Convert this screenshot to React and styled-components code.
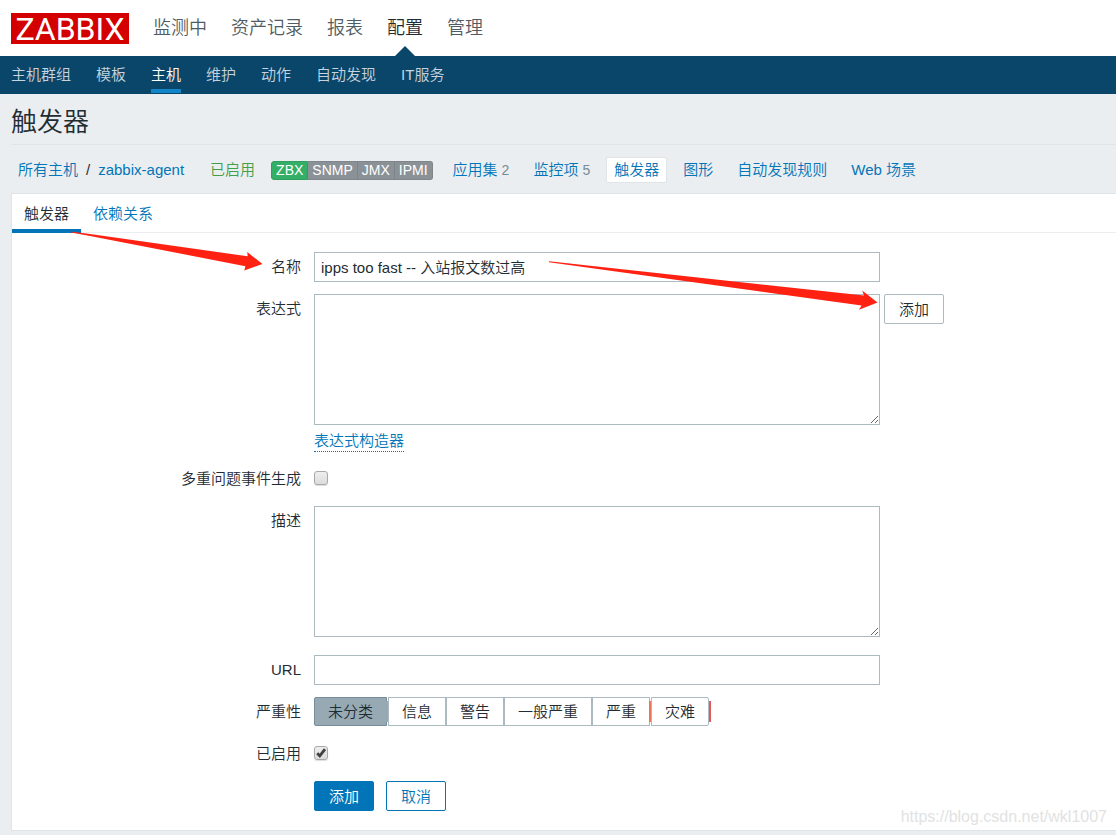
import React from 'react';
import {useState} from 'react';
import styled, {createGlobalStyle} from "styled-components"

const GlobalStyle = createGlobalStyle`
	* {
		box-sizing: border-box;
	}
	body {
		margin: 0;
		background-color: #ebeef0;
		color: #1f2c33;
		font-family: "Liberation Sans", "Noto Sans CJK SC", sans-serif;
		font-size: 15px;
		font-weight: 350;
		line-height: 20px;
	}
	button, input, textarea {
		font: inherit;
		color: inherit;
	}
`

const Page = styled.div`
	position: relative;
	overflow-x: hidden;
`

const TopBar = styled.header`
	display: flex;
	align-items: center;
	height: 56px;
	padding: 0 11px;
	background-color: #fff;
`

const Logo = styled.a`
	min-width: 118px;
	height: 31px;
	margin-right: 24px;
	background-color: #d40000;
	color: #fff;
	font-family: Roboto, "Liberation Sans", sans-serif;
	font-size: 32px;
	font-weight: 400;
	line-height: 32px;
	text-align: center;
	text-decoration: none;
`

const TopNav = styled.nav`
	display: flex;
	align-self: stretch;
	gap: 24px;
`

const TopLink = styled.a`
	position: relative;
	color: ${({$active}) => $active ? "#1f2c33" : "#4f5c63"};
	font-size: 18px;
	line-height: 56px;
	text-decoration: none;

	&::after {
		content: "";
		display: ${({$active}) => $active ? "block" : "none"};
		position: absolute;
		bottom: 0;
		left: 50%;
		margin-left: -10px;
		border: 10px solid transparent;
		border-top: none;
		border-bottom-color: #0a466a;
	}
`

const SubNav = styled.nav`
	display: flex;
	gap: 25px;
	height: 38px;
	padding: 0 11px;
	background-color: #0a466a;
`

const SubLink = styled.a`
	height: 37px;
	border-bottom: 4px solid ${({$active}) => $active ? "#1284c8" : "transparent"};
	color: ${({$active}) => $active ? "#fff" : "#c5d4de"};
	line-height: 37px;
	text-decoration: none;
`

const Main = styled.main`
	padding-left: 11px;
`

const Title = styled.h1`
	height: 51px;
	margin: 0;
	border-bottom: 1px solid #dfe4e7;
	font-size: 26px;
	font-weight: inherit;
	line-height: 56px;
`

const Crumbs = styled.nav`
	display: flex;
	align-items: center;
	gap: 8px;
	height: 48px;
	padding-top: 2px;
`

const Path = styled.div`
	display: flex;
	gap: 8px;
	padding: 0 10px 0 7px;
`

const Link = styled.a`
	color: #0275b8;
	text-decoration: none;
`

const CrumbLink = styled(Link)`
	padding: 2px 7px;
	border: 1px solid ${({$active}) => $active ? "#dfe4e7" : "transparent"};
	border-radius: 2px;
	background-color: ${({$active}) => $active ? "#fff" : "transparent"};
`

const Count = styled.sup`
	margin-left: 4px;
	color: #768d99;
	font-size: 14px;
	line-height: 1;
	vertical-align: baseline;
`

const Enabled = styled.span`
	padding: 0 8px;
	color: #429e47;
`

const Interfaces = styled.div`
	display: flex;
	margin-right: 4px;
`

const Interface = styled.span`
	padding: 0 4px;
	border: 1px solid ${({$on}) => $on ? "#2f9f5e" : "#7e868c"};
	border-left-width: ${({$on}) => $on ? "1px" : "0"};
	background-color: ${({$on}) => $on ? "#34af67" : "#8b9297"};
	color: #fff;
	font-size: 14px;
	line-height: 17px;

	&:first-child {
		border-radius: 3px 0 0 3px;
	}
	&:last-child {
		border-radius: 0 3px 3px 0;
	}
`

const Panel = styled.section`
	border: 1px solid #dfe4e7;
	border-right: none;
	margin-bottom: 4px;
	background-color: #fff;
`

const Tabs = styled.div`
	display: flex;
	height: 39px;
	border-bottom: 1px solid #ebeef0;
`

const Tab = styled.button`
	height: 39px;
	padding: 4px 12px 0;
	border: none;
	border-bottom: 4px solid ${({$active}) => $active ? "#0275b8" : "transparent"};
	background: none;
	color: ${({$active}) => $active ? "#1f2c33" : "#0275b8"};
	cursor: pointer;
`

const Form = styled.form`
	display: flex;
	flex-direction: column;
	gap: 12px;
	padding: 19px 0;
`

const Row = styled.div`
	display: grid;
	grid-template-columns: 289px minmax(0, 1fr);
	column-gap: 13px;
	min-height: 30px;
`

const Label = styled.label`
	line-height: 30px;
	text-align: right;
`

const Field = styled.div`
	display: flex;
	flex-wrap: wrap;
	align-items: flex-start;
	gap: 4px;
`

const Stack = styled.div`
	flex: 0 1 566px;
`

const TextBox = styled.input`
	flex: 0 1 566px;
	width: 100%;
	height: 30px;
	padding: 0 6px 2px;
	border: 1px solid #acbbc2;
	background-color: #fff;
`

const TextArea = styled.textarea`
	display: block;
	width: 100%;
	height: 131px;
	margin-bottom: 6px;
	padding: 4px 6px;
	border: 1px solid #acbbc2;
	background-color: #fff;
`

const DottedLink = styled(Link)`
	display: inline-block;
	height: 21px;
	border-bottom: 1px dotted #0275b8;
`

const Tick = styled.span`
	position: relative;
	height: 14px;
	margin-top: 7px;

	svg {
		position: absolute;
		top: 0;
		left: 0;
		pointer-events: none;
	}
`

const TickBox = styled.input`
	appearance: none;
	display: block;
	width: 14px;
	height: 14px;
	margin: 0;
	border: 1px solid #a9a9a9;
	border-radius: 3px;
	background: linear-gradient(#eee, #dcdcdc);
	box-shadow: 0 1px 1px #ddd;
`

const Severities = styled.div`
	display: flex;
`

const Severity = styled.label`
	position: relative;
	padding: 0 13px;
	margin-right: ${({$edge}) => $edge ? "1px" : "0"};
	border: 1px solid #acbbc2;
	line-height: 27px;
	cursor: pointer;

	&:first-child {
		border-radius: 2px 0 0 2px;
	}
	&:last-child {
		border-radius: 0 2px 2px 0;
	}
	&:has(input:checked) {
		border-color: #768d99;
		background-color: #97aab3;
	}
	&::after {
		content: "";
		position: absolute;
		top: 3px;
		bottom: 3px;
		left: 100%;
		width: 2px;
		margin-left: ${({$last}) => $last ? "1px" : "0"};
		background-color: ${({$edge}) => $edge || "transparent"};
	}
	input {
		position: absolute;
		opacity: 0;
	}
`

const Button = styled.button`
	height: 30px;
	padding: 1px 14px 0;
	border: 1px solid ${({$variant}) => $variant ? "#0275b8" : "#acbbc2"};
	border-radius: 2px;
	background-color: ${({$variant}) => $variant === "primary" ? "#0275b8" : "#fff"};
	color: ${({$variant}) => $variant === "primary" ? "#fff" : $variant ? "#0275b8" : "#1f2c33"};
	cursor: pointer;
`

const Actions = styled.div`
	display: flex;
	gap: 12px;
`

const Arrows = styled.svg`
	position: absolute;
	top: 0;
	left: 0;
	overflow: visible;
	pointer-events: none;
`

const Watermark = styled.div`
	position: absolute;
	right: 9px;
	bottom: 8px;
	color: #e2e2e2;
	font-size: 16px;
`

const topItems = ["监测中", "资产记录", "报表", "配置", "管理"]
const subItems = ["主机群组", "模板", "主机", "维护", "动作", "自动发现", "IT服务"]
const crumbs = [
	{name: "应用集", count: 2},
	{name: "监控项", count: 5},
	{name: "触发器", active: true},
	{name: "图形"},
	{name: "自动发现规则"},
	{name: "Web 场景"},
]
const severities = [
	{name: "未分类", edge: "#97aab3"},
	{name: "信息"},
	{name: "警告"},
	{name: "一般严重"},
	{name: "严重", edge: "#e97659"},
	{name: "灾难", edge: "#e45959"},
]

const Checkbox = ({id, defaultChecked}) => {
	const [checked, setChecked] = useState(!!defaultChecked)

	return (
		<Tick>
			<TickBox id={id} type="checkbox" checked={checked} onChange={e => setChecked(e.target.checked)} />
			{checked && (
				<svg width="14" height="14" viewBox="0 0 14 14" fill="none" stroke="#404040" strokeWidth="2.8">
					<path d="M3.2 7.2L5.8 9.8L11 3.2" />
				</svg>
			)}
		</Tick>
	)
}

const App = () => {
	const [tab, setTab] = useState("触发器")
	const [name, setName] = useState("ipps too fast -- 入站报文数过高")
	const [severity, setSeverity] = useState("未分类")

	return (
		<Page>
			<GlobalStyle />
			<TopBar>
				<Logo href="#">ZABBIX</Logo>
				<TopNav>
					{topItems.map((item) => (
						<TopLink key={item} href="#" $active={item === "配置"}>{item}</TopLink>
					))}
				</TopNav>
			</TopBar>
			<SubNav>
				{subItems.map((item) => (
					<SubLink key={item} href="#" $active={item === "主机"}>{item}</SubLink>
				))}
			</SubNav>
			<Main>
				<Title>触发器</Title>
				<Crumbs>
					<Path>
						<Link href="#">所有主机</Link>
						<span>/</span>
						<Link href="#">zabbix-agent</Link>
					</Path>
					<Enabled>已启用</Enabled>
					<Interfaces>
						<Interface $on>ZBX</Interface>
						<Interface>SNMP</Interface>
						<Interface>JMX</Interface>
						<Interface>IPMI</Interface>
					</Interfaces>
					{crumbs.map((item) => (
						<CrumbLink key={item.name} href="#" $active={item.active}>
							{item.name}
							{item.count && <Count>{item.count}</Count>}
						</CrumbLink>
					))}
				</Crumbs>
				<Panel>
					<Tabs>
						{["触发器", "依赖关系"].map((item) => (
							<Tab key={item} type="button" $active={tab === item} onClick={() => setTab(item)}>{item}</Tab>
						))}
					</Tabs>
					<Form onSubmit={e => e.preventDefault()}>
						<Row>
							<Label htmlFor="name">名称</Label>
							<Field>
								<TextBox id="name" type="text" value={name} onChange={e => setName(e.target.value)} />
							</Field>
						</Row>
						<Row>
							<Label htmlFor="expression">表达式</Label>
							<Field>
								<Stack>
									<TextArea id="expression" />
									<DottedLink href="#">表达式构造器</DottedLink>
								</Stack>
								<Button type="button">添加</Button>
							</Field>
						</Row>
						<Row>
							<Label htmlFor="multiple">多重问题事件生成</Label>
							<Field>
								<Checkbox id="multiple" />
							</Field>
						</Row>
						<Row>
							<Label htmlFor="description">描述</Label>
							<Field>
								<Stack>
									<TextArea id="description" />
								</Stack>
							</Field>
						</Row>
						<Row>
							<Label htmlFor="url">URL</Label>
							<Field>
								<TextBox id="url" type="text" />
							</Field>
						</Row>
						<Row>
							<Label as="span" id="severity">严重性</Label>
							<Field>
								<Severities role="radiogroup" aria-labelledby="severity">
									{severities.map((item, i) => (
										<Severity key={item.name} $edge={item.edge} $last={i === severities.length - 1}>
											<input
												type="radio"
												name="severity"
												checked={severity === item.name}
												onChange={() => setSeverity(item.name)}
											/>
											{item.name}
										</Severity>
									))}
								</Severities>
							</Field>
						</Row>
						<Row>
							<Label htmlFor="enabled">已启用</Label>
							<Field>
								<Checkbox id="enabled" defaultChecked />
							</Field>
						</Row>
						<Row>
							<span />
							<Actions>
								<Button type="submit" $variant="primary">添加</Button>
								<Button type="button" $variant="outline">取消</Button>
							</Actions>
						</Row>
					</Form>
				</Panel>
			</Main>
			<Arrows width="1" height="1" fill="#ff2213" aria-hidden="true">
				<path d="M71 231.6L90 234L247.7 256.3L247.2 252L262.5 264L244.3 270.5L245.4 266.2L90 236L71 232.6Z" />
				<path d="M549 261.3L864 295.6L862.2 290.5L877.5 302.4L859 309.7L861.6 305.4L549 262.3Z" />
			</Arrows>
			<Watermark>https://blog.csdn.net/wkl1007</Watermark>
		</Page>
	);
};

export default App;
